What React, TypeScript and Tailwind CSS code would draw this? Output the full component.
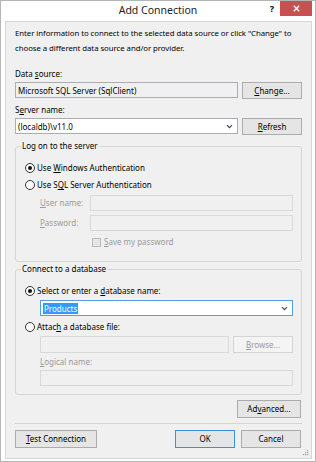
import React from "react";

// Windows 8 style "Add Connection" dialog
const FONT = "[font-family:'Noto_Sans','Open_Sans',sans-serif]";

function K({ text, at }: { text: string; at: number }) {
  return (
    <span className="whitespace-nowrap">
      {text.slice(0, at)}
      <u className="underline underline-offset-[1px]">{text[at]}</u>
      {text.slice(at + 1)}
    </span>
  );
}

function Btn({
  children,
  className = "",
  primary = false,
  disabled = false,
}: {
  children: React.ReactNode;
  className?: string;
  primary?: boolean;
  disabled?: boolean;
}) {
  return (
    <button
      className={`flex h-[17px] shrink-0 items-center justify-center border bg-[#e5e5e5] text-[8px] leading-[12px] ${
        primary ? "border-[#3c8fdc]" : disabled ? "border-[#d4d4d4] bg-[#f4f4f4]" : "border-[#acacac]"
      } ${disabled ? "text-[#9a9a9a]" : "text-black"} ${className}`}
    >
      {children}
    </button>
  );
}

function Field({
  children,
  className = "",
  disabled = false,
  readOnly = false,
  combo = false,
  focused = false,
}: {
  children?: React.ReactNode;
  className?: string;
  disabled?: boolean;
  readOnly?: boolean;
  combo?: boolean;
  focused?: boolean;
}) {
  const border = focused ? "border-[#569de5]" : disabled ? "border-[#d9d9d9]" : "border-[#abadb3]";
  const bg = disabled || readOnly ? "bg-[#f0f0f0]" : "bg-white";
  return (
    <div className={`flex h-[16px] items-center border ${border} ${bg} pl-[2px] pr-[4px] text-[8px] ${className}`}>
      <div className="min-w-0 flex-1 whitespace-nowrap leading-[13px]">{children}</div>
      {combo && (
        <svg width="7" height="5" viewBox="0 0 7 5" className="shrink-0">
          <path d="M1 1.2 L3.5 3.7 L6 1.2" fill="none" stroke="#444" strokeWidth="1.1" />
        </svg>
      )}
    </div>
  );
}

function Radio({ checked, children }: { checked?: boolean; children: React.ReactNode }) {
  return (
    <div className="flex h-[14px] items-center gap-[2px] text-[8px] leading-[12px]">
      <span className="flex h-[10px] w-[10px] items-center justify-center rounded-full border border-[#333] bg-white">
        {checked && <span className="h-[4px] w-[4px] rounded-full bg-[#111]" />}
      </span>
      {children}
    </div>
  );
}

export default function App() {
  return (
    <div className={`flex h-[462px] w-[316px] flex-col border border-[#b5b5b5] bg-white text-black ${FONT}`}>
      {/* Title bar */}
      <div className="flex h-[20px] shrink-0 items-start">
        <div className="w-[48px]" />
        <div className="flex-1 pt-[2px] text-center text-[10.5px] leading-[15px] text-[#222]">Add Connection</div>
        <div className="flex w-[48px] items-start justify-end">
          <span className="mr-[6px] pt-[2px] text-[9px] font-bold leading-[12px]">?</span>
          <div className="mr-[3px] flex h-[15px] w-[32px] items-center justify-center bg-[#c75050]">
            <svg width="7" height="7" viewBox="0 0 7 7">
              <path d="M0.8 0.8 L6.2 6.2 M6.2 0.8 L0.8 6.2" stroke="#fff" strokeWidth="1.4" />
            </svg>
          </div>
        </div>
      </div>

      {/* Client area */}
      <div className="relative ml-[4px] flex h-[438px] w-[307px] flex-col border border-[#d7d7d7] bg-[#f0f0f0] px-[9px] pt-[4px]">
        <p className="text-[7.8px] leading-[15px] tracking-[-0.05px]">
          Enter information to connect to the selected data source or click "Change" to choose a different data source and/or provider.
        </p>

        <div className="mt-[11px] text-[8px] leading-[14px]">
          Data <K text="source:" at={0} />
        </div>
        <div className="mt-[1px] flex gap-[4px]">
          <Field readOnly className="flex-1">Microsoft SQL Server (SqlClient)</Field>
          <Btn className="w-[60px]">
            <K text="Change..." at={0} />
          </Btn>
        </div>

        <div className="mt-[4px] text-[8px] leading-[14px]">
          <K text="Server name:" at={1} />
        </div>
        <div className="mt-[1px] flex gap-[4px]">
          <Field combo className="flex-1">(localdb)\v11.0</Field>
          <Btn className="w-[60px]">
            <K text="Refresh" at={0} />
          </Btn>
        </div>

        {/* Log on group */}
        <fieldset className="mt-[4px] rounded-[3px] border border-[#d5d5d5] pr-[8px] pb-[12px] pl-[9px]">
          <legend className="-ml-[4px] px-[1px] text-[8px] leading-[14px]">Log on to the server</legend>
          <div className="pt-[8px]">
            <Radio checked>
              <span>
                Use <K text="Windows Authentication" at={0} />
              </span>
            </Radio>
          </div>
          <div className="mt-[3px]">
            <Radio>
              <span>
                Use S<u className="underline underline-offset-[1px]">Q</u>L Server Authentication
              </span>
            </Radio>
          </div>
          <div className="mt-[3px] flex items-center pl-[15px]">
            <span className="w-[50px] text-[8px] text-[#9a9a9a]">
              <K text="User name:" at={0} />
            </span>
            <Field disabled className="flex-1" />
          </div>
          <div className="mt-[4px] flex items-center pl-[15px]">
            <span className="w-[50px] text-[8px] text-[#9a9a9a]">
              <K text="Password:" at={0} />
            </span>
            <Field disabled className="flex-1" />
          </div>
          <div className="mt-[4px] flex h-[14px] items-center gap-[3px] pl-[67px] text-[8px] text-[#9a9a9a]">
            <span className="h-[9px] w-[9px] border border-[#bcbcbc] bg-[#e6e6e6]" />
            <K text="Save my password" at={0} />
          </div>
        </fieldset>

        {/* Database group */}
        <fieldset className="rounded-[3px] border border-[#d5d5d5] pr-[8px] pb-[8px] pl-[9px]">
          <legend className="-ml-[4px] px-[1px] text-[8px] leading-[14px]">Connect to a database</legend>
          <div className="pt-[8px]">
            <Radio checked>
              <span>
                Select or enter a <K text="database name:" at={0} />
              </span>
            </Radio>
          </div>
          <div className="mt-[2px] pl-[15px]">
            <Field combo focused>
              <span className="bg-[#3399ff] px-[1px] text-white">Products</span>
            </Field>
          </div>
          <div className="mt-[4px]">
            <Radio>
              <span>
                Attac<u className="underline underline-offset-[1px]">h</u> a database file:
              </span>
            </Radio>
          </div>
          <div className="mt-[2px] flex gap-[4px] pl-[15px]">
            <Field disabled className="h-[17px] flex-1" />
            <Btn disabled className="w-[60px]">
              <K text="Browse..." at={0} />
            </Btn>
          </div>
          <div className="mt-[2px] pl-[15px] text-[8px] leading-[14px] text-[#9a9a9a]">
            <K text="Logical name:" at={0} />
          </div>
          <div className="mt-[1px] pl-[15px]">
            <Field disabled />
          </div>
        </fieldset>

        <div className="mt-[5px] flex justify-end pr-[1px]">
          <Btn className="h-[18px] w-[64px]">
            <K text="Advanced..." at={2} />
          </Btn>
        </div>

        <div className="mt-[5px] h-[1px] bg-[#d5d5d5]" />

        <div className="mt-[6px] flex gap-[6px] pr-[1px]">
          <Btn className="h-[18px] w-[82px]">
            <K text="Test Connection" at={0} />
          </Btn>
          <div className="flex-1" />
          <Btn primary className="h-[18px] w-[60px]">OK</Btn>
          <Btn className="h-[18px] w-[60px]">Cancel</Btn>
        </div>

        {/* size grip */}
        <svg width="6" height="6" viewBox="0 0 6 6" className="absolute right-[2px] bottom-[2px]">
          <rect x="4" y="0" width="1.2" height="1.2" fill="#a0a0a0" />
          <rect x="2" y="2" width="1.2" height="1.2" fill="#a0a0a0" />
          <rect x="4" y="2" width="1.2" height="1.2" fill="#a0a0a0" />
          <rect x="0" y="4" width="1.2" height="1.2" fill="#a0a0a0" />
          <rect x="2" y="4" width="1.2" height="1.2" fill="#a0a0a0" />
          <rect x="4" y="4" width="1.2" height="1.2" fill="#a0a0a0" />
        </svg>
      </div>
    </div>
  );
}
